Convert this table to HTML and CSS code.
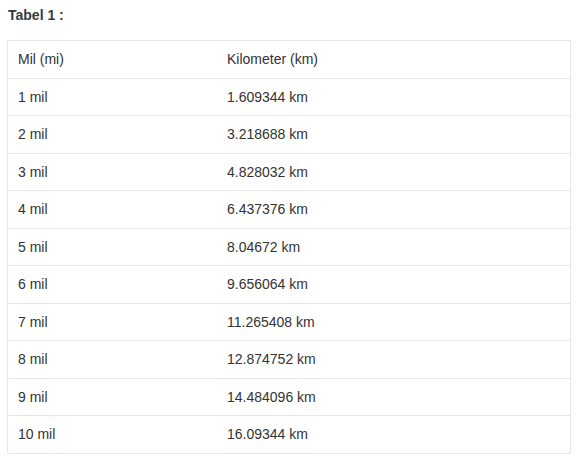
FILE: index.html
```html
<!DOCTYPE html>
<html>
<head>
<meta charset="utf-8">
<link rel="stylesheet" href="styles.css">
</head>
<body>
<div class="wrap">
  <p class="title">Tabel 1 :</p>
  <table class="conv">
    <tr><td class="c1">Mil (mi)</td><td>Kilometer (km)</td></tr>
    <tr><td class="c1">1 mil</td><td>1.609344 km</td></tr>
    <tr><td class="c1">2 mil</td><td>3.218688 km</td></tr>
    <tr><td class="c1">3 mil</td><td>4.828032 km</td></tr>
    <tr><td class="c1">4 mil</td><td>6.437376 km</td></tr>
    <tr><td class="c1">5 mil</td><td>8.04672 km</td></tr>
    <tr><td class="c1">6 mil</td><td>9.656064 km</td></tr>
    <tr><td class="c1">7 mil</td><td>11.265408 km</td></tr>
    <tr><td class="c1">8 mil</td><td>12.874752 km</td></tr>
    <tr><td class="c1">9 mil</td><td>14.484096 km</td></tr>
    <tr><td class="c1">10 mil</td><td>16.09344 km</td></tr>
  </table>
</div>
</body>
</html>
```
FILE: styles.css
```css
html, body {
  margin: 0;
  padding: 0;
  background: #fff;
}
.wrap {
  padding: 7px 9px 0 7px;
  font-family: "Liberation Sans", Arial, sans-serif;
  color: #333;
}
.title {
  margin: 0 0 0 1px;
  font-weight: bold;
  font-size: 14px;
  line-height: 16px;
  color: #333b45;
  height: 33px;
}
.conv {
  width: 564px;
  border-collapse: collapse;
  border: 1px solid #e6e6e6;
  font-size: 14px;
}
.conv td {
  border-top: 1px solid #e6e6e6;
  border-bottom: 1px solid #e6e6e6;
  padding: 8px 10px;
  line-height: 20.5px;
  text-align: left;
  color: #333;
}
.conv .c1 {
  width: 189px;
}
```
